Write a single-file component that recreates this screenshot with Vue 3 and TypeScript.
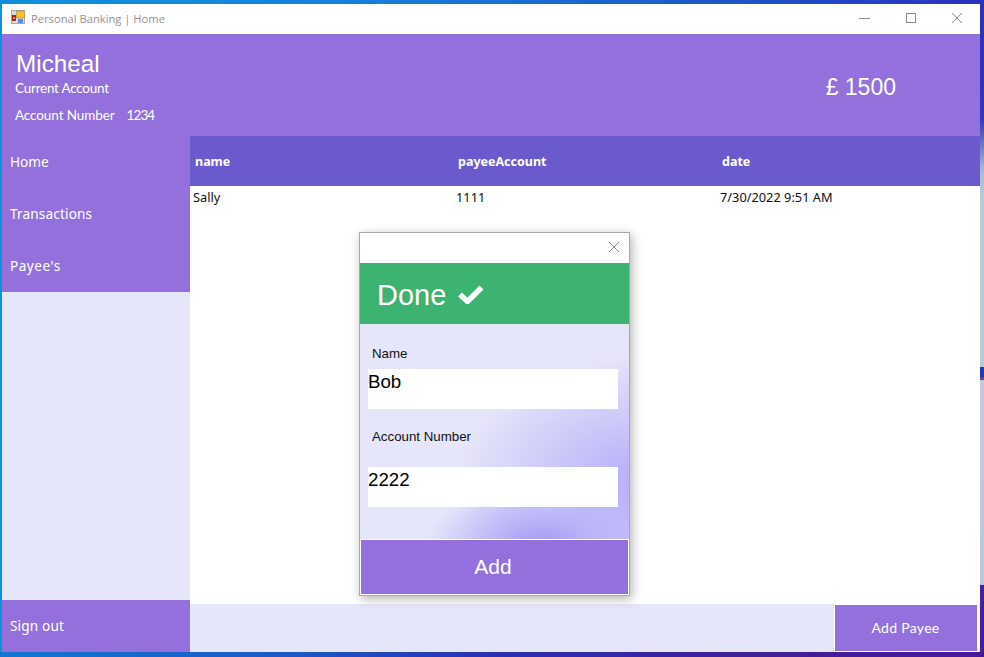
<script setup lang="ts">
const rows = [{ name: 'Sally', account: '1111', date: '7/30/2022 9:51 AM' }]
const nav = ['Home', 'Transactions', "Payee's"]
</script>

<template>
  <div class="desktop">
    <div class="window">
      <div class="titlebar">
        <svg class="appicon" width="16" height="16" viewBox="0 0 16 16">
          <rect x="0.5" y="0.5" width="13" height="13" fill="#dcdcdc" stroke="#a8a8a8" />
          <rect x="1" y="5" width="4" height="6" fill="#a82020" />
          <rect x="2.5" y="7" width="1.5" height="2" fill="#e8b0a0" />
          <rect x="5.5" y="1" width="8" height="7" fill="#f4c430" stroke="#b89020" stroke-width="0.6" />
          <rect x="7" y="9" width="5" height="4" fill="#5a8ee0" />
        </svg>
        <span class="title">Personal Banking | Home</span>
        <div class="controls">
          <svg width="12" height="12" viewBox="0 0 12 12"><path d="M0 6.5H11" stroke="#8a8a8a" fill="none" /></svg>
          <svg width="12" height="12" viewBox="0 0 12 12"><rect x="1.5" y="1.5" width="9" height="9" stroke="#8a8a8a" fill="none" /></svg>
          <svg width="12" height="12" viewBox="0 0 12 12"><path d="M1 1L11 11M11 1L1 11" stroke="#8a8a8a" fill="none" /></svg>
        </div>
      </div>

      <header class="banner">
        <div class="who">
          <div class="user">Micheal</div>
          <div class="acct">Current Account</div>
          <div class="acct number"><span>Account Number</span><span class="acctno">1234</span></div>
        </div>
        <div class="balance">£ 1500</div>
      </header>

      <div class="body">
        <aside class="side">
          <nav class="nav">
            <div v-for="n in nav" :key="n" class="navitem">{{ n }}</div>
          </nav>
          <div class="navitem signout">Sign out</div>
        </aside>

        <main class="main">
          <div class="table">
            <div class="thead">
              <div>name</div>
              <div>payeeAccount</div>
              <div>date</div>
            </div>
            <div v-for="r in rows" :key="r.name" class="trow">
              <div>{{ r.name }}</div>
              <div>{{ r.account }}</div>
              <div>{{ r.date }}</div>
            </div>
          </div>
          <div class="footer">
            <button class="addpayee">Add Payee</button>
          </div>
        </main>
      </div>

      <div class="dialog">
        <div class="dtitle">
          <svg width="12" height="12" viewBox="0 0 12 12"><path d="M1 1L11 11M11 1L1 11" stroke="#8a8a8a" fill="none" /></svg>
        </div>
        <div class="done">
          <span class="donetext">Done</span>
          <svg width="26" height="20" viewBox="0 0 26 20"><path d="M2 10.5L9.5 17.5L23.5 3.5" stroke="#fff" stroke-width="5.5" fill="none" /></svg>
        </div>
        <div class="form">
          <label class="lab first">Name</label>
          <div class="input">Bob</div>
          <label class="lab second">Account Number</label>
          <div class="input">2222</div>
        </div>
        <button class="add">Add</button>
      </div>
    </div>
  </div>
</template>

<style>
html, body { margin: 0; padding: 0; overflow: hidden; }
</style>

<style scoped>
.desktop {
  width: 984px;
  height: 657px;
  box-sizing: border-box;
  padding: 4px 4px 5px 2px;
  background: linear-gradient(90deg, #1090dc 0%, #1680dc 35%, #1c5cca 70%, #2a30c0 100%);
  position: relative;
}
.desktop::before {
  content: '';
  position: absolute;
  right: 0;
  top: 0;
  bottom: 0;
  width: 4px;
  background: linear-gradient(180deg,
    #2a30c0 0, #2a38c0 118px, #5a60b8 136px, #a8bcd0 170px, #b8ccd8 200px,
    #b8ccd8 367px, #1a3ac0 367px, #1a3ac0 377px, #7a3a9c 377px, #7a3a9c 380px,
    #c4c8dc 380px, #b8c8dc 585px, #45209a 585px, #45209a 657px);
}
.desktop::after {
  content: '';
  position: absolute;
  left: 0;
  right: 0;
  bottom: 0;
  height: 5px;
  background: linear-gradient(90deg, #1078d0 0%, #1c58c8 30%, #2a30b8 50%, #40209c 75%, #48189a 100%);
}
.window {
  position: relative;
  z-index: 1;
  height: 100%;
  display: flex;
  flex-direction: column;
  background: #fff;
}
.titlebar {
  height: 30px;
  flex: none;
  display: flex;
  align-items: center;
  padding: 0 0 0 9px;
  background: #fff;
}
.appicon { margin-top: -3px; }
.title {
  margin-left: 4px;
  font: 11.2px "Open Sans", "Noto Sans", sans-serif;
  color: #9a9090;
  margin-top: -2px;
}
.controls {
  margin-left: auto;
  display: flex;
  gap: 34px;
  padding-right: 17px;
  margin-top: -3px;
}
.banner {
  height: 102px;
  flex: none;
  display: flex;
  background: #9370db;
  color: #fff;
}
.who { padding: 17px 0 0 13px; }
.user {
  font: 24.3px/26px "Liberation Sans", sans-serif;
  margin-left: 1px;
}
.acct {
  font: 13.5px/18px "Lato", "Noto Sans", sans-serif;
  margin-top: 2px;
  letter-spacing: -0.24px;
}
.number {
  margin-top: 9px;
  display: flex;
  gap: 12px;
}
.number span:first-child { letter-spacing: -0.1px; }
.acctno { letter-spacing: -0.9px; }
.balance {
  margin-left: auto;
  margin-right: 84px;
  margin-top: 39px;
  font: 23px/28px "Liberation Sans", sans-serif;
}
.body {
  flex: 1;
  min-height: 0;
  display: flex;
}
.side {
  width: 188px;
  flex: none;
  display: flex;
  flex-direction: column;
  justify-content: space-between;
  background: #e6e6fa;
}
.nav { background: #9370db; }
.navitem {
  height: 52px;
  box-sizing: border-box;
  padding: 0 0 2px 8px;
  display: flex;
  align-items: center;
  background: #9370db;
  color: #fff;
  font: 13.6px "Noto Sans", sans-serif;
}
.navitem:nth-child(2) { letter-spacing: 0.15px; }
.navitem:nth-child(3) { letter-spacing: 0.5px; }
.main {
  flex: 1;
  display: flex;
  flex-direction: column;
  min-width: 0;
}
.table { flex: 1; background: #fff; }
.thead, .trow {
  display: grid;
  grid-template-columns: 263px 264px 1fr;
  font: 12.8px "Noto Sans", sans-serif;
}
.thead {
  height: 50px;
  align-items: center;
  background: #6a5acd;
  color: #fff;
  font-weight: 700;
  font-size: 12.5px;
  padding-left: 5px;
}
.trow {
  padding: 2px 0 0 3px;
  color: #111;
  line-height: 18px;
}
.footer {
  height: 48px;
  flex: none;
  display: flex;
  justify-content: flex-end;
  background: #e6e6fa;
}
.addpayee {
  width: 146px;
  border: 1px solid #fff;
  border-right-width: 3px;
  background: #9370db;
  color: #fff;
  font: 14px "Lato", "Noto Sans", sans-serif;
  letter-spacing: 0.3px;
  padding: 0 1px 2px 0;
}
.dialog {
  position: absolute;
  left: 357px;
  top: 228px;
  width: 271px;
  height: 364px;
  box-sizing: border-box;
  border: 1px solid #a8a8a8;
  background: #fff;
  box-shadow: 2px 3px 10px rgba(0, 0, 0, 0.3);
  display: flex;
  flex-direction: column;
}
.dtitle {
  height: 30px;
  box-sizing: border-box;
  flex: none;
  display: flex;
  align-items: center;
  justify-content: flex-end;
  padding: 0 9px 2px 0;
}
.done {
  height: 61px;
  flex: none;
  background: #3cb371;
  color: #fff;
  display: flex;
  align-items: center;
  gap: 12px;
  padding-left: 17px;
  font: 29px "Liberation Sans", sans-serif;
}
.donetext { padding-top: 4px; }
.form {
  flex: 1;
  min-height: 0;
  padding: 0 11px 0 8px;
  background:
    radial-gradient(ellipse 115px 55px at 180px 218px, #a49df4 0%, rgba(180, 174, 248, 0.75) 45%, rgba(230, 230, 250, 0) 100%),
    radial-gradient(ellipse 190px 130px at 285px 160px, #b4acf8 0%, rgba(190, 184, 248, 0.85) 35%, rgba(230, 230, 250, 0) 100%),
    #e6e6fa;
}
.lab {
  display: block;
  font: 13.3px/16px "Liberation Sans", sans-serif;
  color: #111;
  padding-left: 4px;
}
.first { padding-top: 22px; padding-bottom: 7px; }
.second { padding-top: 20px; padding-bottom: 22px; }
.input {
  height: 40px;
  background: #fff;
  color: #000;
  font: 18.7px/25px "Liberation Sans", sans-serif;
}
.add {
  height: 56px;
  flex: none;
  border: 1px solid #fff;
  background: #9370db;
  color: #fff;
  font: 21px "Liberation Sans", sans-serif;
  padding: 0 3px 0 0;
  margin: 0;
}
</style>
